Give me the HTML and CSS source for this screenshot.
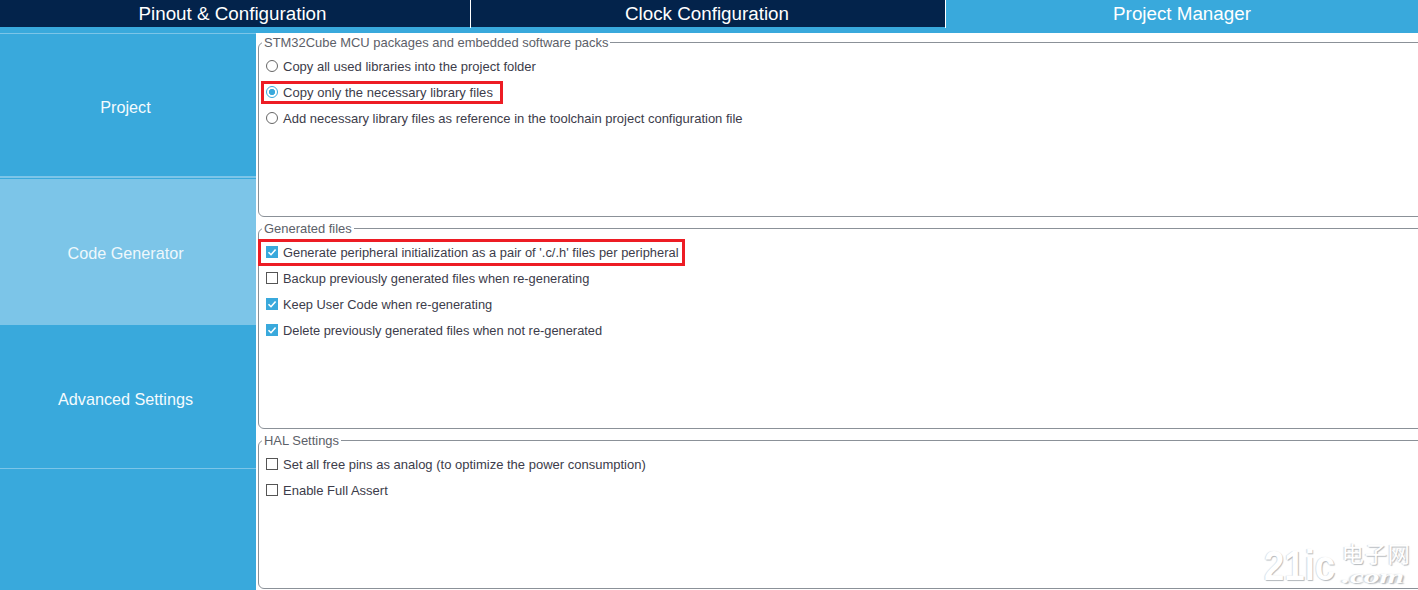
FILE: index.html
```html
<!DOCTYPE html>
<html lang="en">
<head>
    <meta charset="UTF-8">
    <title>Project Manager</title>
    <link rel="stylesheet" href="styles.css">
</head>
<body>
<div class="tabs">
    <div class="tab tab-pinout">Pinout &amp; Configuration</div>
    <div class="tab tab-clock">Clock Configuration</div>
    <div class="tab tab-active">Project Manager</div>
</div>
<div class="strip"></div>

<div class="content">
    <div class="sidebar">
        <div class="side-item side-project">Project</div>
        <div class="side-item side-code">Code Generator</div>
        <div class="side-item side-advanced">Advanced Settings</div>
    </div>

    <div class="panels">
        <fieldset class="group group-packs">
            <legend>STM32Cube MCU packages and embedded software packs</legend>
            <div class="row"><span class="radio"></span><span>Copy all used libraries into the project folder</span></div>
            <div class="row"><span class="marked marked-radio"><span class="radio radio-on"></span><span>Copy only the necessary library files</span></span></div>
            <div class="row"><span class="radio"></span><span>Add necessary library files as reference in the toolchain project configuration file</span></div>
        </fieldset>

        <fieldset class="group group-files">
            <legend>Generated files</legend>
            <div class="row"><span class="marked marked-check"><span class="check check-on"><svg viewBox="0 0 12 12"><path d="M2.5 6.2 5 8.7 9.6 3.4"/></svg></span><span>Generate peripheral initialization as a pair of '.c/.h' files per peripheral</span></span></div>
            <div class="row"><span class="check"></span><span>Backup previously generated files when re-generating</span></div>
            <div class="row"><span class="check check-on"><svg viewBox="0 0 12 12"><path d="M2.5 6.2 5 8.7 9.6 3.4"/></svg></span><span>Keep User Code when re-generating</span></div>
            <div class="row"><span class="check check-on"><svg viewBox="0 0 12 12"><path d="M2.5 6.2 5 8.7 9.6 3.4"/></svg></span><span>Delete previously generated files when not re-generated</span></div>
        </fieldset>

        <fieldset class="group group-hal">
            <legend>HAL Settings</legend>
            <div class="row"><span class="check"></span><span>Set all free pins as analog (to optimize the power consumption)</span></div>
            <div class="row"><span class="check"></span><span>Enable Full Assert</span></div>
        </fieldset>
    </div>
</div>

<div class="watermark">
    <span class="wm-num">21ic</span>
    <span class="wm-site">
        <span class="wm-cn">电子网</span>
        <span class="wm-com">.com</span>
    </span>
</div>
</body>
</html>
```

FILE: styles.css
```css
html, body {
    margin: 0;
    padding: 0;
    height: 590px;
    overflow: hidden;
}

body {
    font-family: "Liberation Sans", Arial, sans-serif;
    background-color: #fff;
    position: relative;
}

.tabs {
    display: grid;
    grid-template-columns: 471px 475px 472px;
    height: 27px;
    background-color: #03234b;
}

.tab {
    color: #fff;
    font-size: 18.8px;
    line-height: 28px;
    text-align: center;
    border-right: 1px solid #fff;
    box-sizing: border-box;
}

.tab-pinout {
    padding-right: 5px;
}

.tab-clock {
    padding-right: 2px;
}

.tab-active {
    background-color: #39a9dc;
    border-right: none;
}

.strip {
    height: 6px;
    background-color: #39a9dc;
}

.content {
    display: flex;
    height: 557px;
}

.sidebar {
    width: 256px;
    flex-shrink: 0;
    background-color: #39a9dc;
    border-top: 1px solid #7cc5e8;
    box-sizing: border-box;
}

.side-item {
    display: flex;
    align-items: center;
    justify-content: center;
    padding: 6px 5px 0 0;
    color: #f4fbfe;
    font-size: 16.2px;
    box-sizing: border-box;
}

.side-project {
    height: 144px;
    margin-bottom: 1px;
    padding-top: 4px;
    border-bottom: 2px solid #7cc5e8;
}

.side-code {
    height: 146px;
    padding-top: 2px;
    background-color: #7cc5e8;
    color: #eef8fc;
}

.side-advanced {
    height: 144px;
    border-bottom: 1px solid #7cc5e8;
}

.panels {
    flex: 1;
    display: flex;
    flex-direction: column;
    padding: 1px 0 0 2px;
    margin-right: -20px;
}

.group {
    margin: 0 0 3px 0;
    padding: 3px 0 0 7px;
    border: 1px solid #8b9198;
    border-radius: 6px;
    min-width: 0;
    box-sizing: border-box;
    font-size: 13px;
    color: #3c3c4a;
}

.group legend {
    margin-left: -4px;
    padding: 2px 2px 0;
    font-size: 12.95px;
    line-height: 14px;
    color: #5c6068;
}

.group-packs {
    height: 183px;
}

.group-files {
    height: 209px;
    font-size: 12.85px;
}

.group-hal {
    height: 157px;
    margin-bottom: 0;
}

.row {
    display: flex;
    align-items: center;
    gap: 5px;
    height: 26px;
}

.marked {
    display: inline-flex;
    align-items: center;
    gap: 5px;
    outline: 3px solid #ed1c24;
}

.marked-radio {
    height: 17px;
    padding: 0 7px 0 2px;
    margin-left: -2px;
    letter-spacing: 0.05px;
}

.marked-check {
    height: 21px;
    padding: 0 3px 0 5px;
    margin-left: -5px;
    letter-spacing: 0.03px;
}

.radio,
.check {
    display: block;
    width: 12px;
    height: 12px;
    flex-shrink: 0;
    box-sizing: border-box;
}

.radio {
    border: 1px solid #666;
    border-radius: 50%;
    background-color: #fff;
}

.radio-on {
    border-color: #39a9dc;
    background: radial-gradient(circle, #39a9dc 0, #39a9dc 2.8px, #fff 3.4px);
}

.check {
    border: 1px solid #555;
    background-color: #fff;
}

.check-on {
    border: none;
    background-color: #39a9dc;
}

.check svg {
    display: block;
    width: 12px;
    height: 12px;
    fill: none;
    stroke: #fff;
    stroke-width: 1.6;
}

.watermark {
    position: absolute;
    left: 1264px;
    top: 543px;
    display: flex;
    color: #fff;
    text-shadow: 1px 1px 1px #b4b8bc, -1px 0 1px #d8dadc;
    pointer-events: none;
}

.wm-num {
    margin-right: -4px;
    font-size: 42px;
    font-weight: bold;
    line-height: 46px;
    white-space: nowrap;
    transform: scaleX(0.87);
    transform-origin: left center;
}

.wm-site {
    display: flex;
    flex-direction: column;
}

.wm-cn {
    font-family: "Liberation Sans", "Noto Sans CJK SC", sans-serif;
    font-size: 22px;
    line-height: 24px;
    letter-spacing: 1px;
}

.wm-com {
    font-family: "Liberation Serif", serif;
    font-style: italic;
    font-weight: bold;
    font-size: 18px;
    line-height: 20px;
    transform: scaleX(1.75);
    transform-origin: left center;
}
```
